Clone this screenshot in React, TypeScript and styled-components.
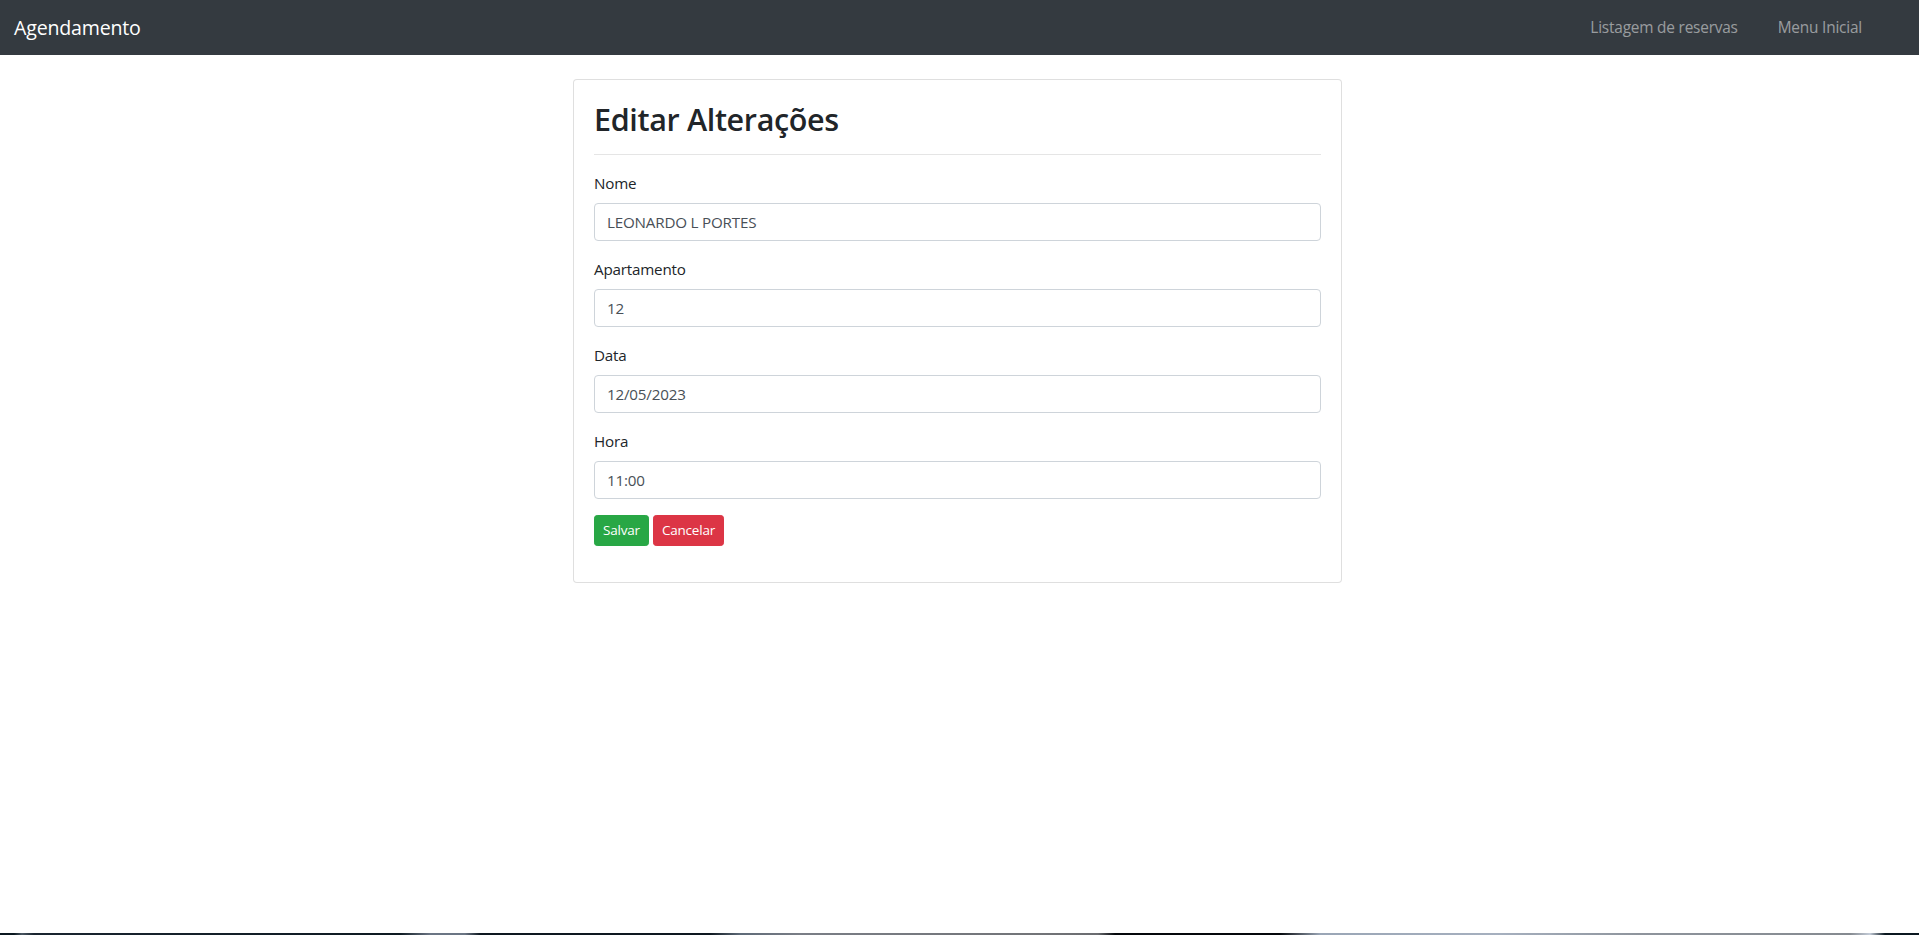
import React from "react";
import styled, { createGlobalStyle } from "styled-components";

const GlobalStyle = createGlobalStyle`
  html, body { margin: 0; padding: 0; background: #fff; }
  body {
    font-family: "Open Sans", "Noto Sans", "Liberation Sans", sans-serif;
    font-size: 16px;
    line-height: 1.5;
    color: #212529;
  }
  * { box-sizing: border-box; }
`;

const Page = styled.div`
  min-height: 100vh;
  display: flex;
  flex-direction: column;
`;

const NavBar = styled.nav`
  height: 55px;
  background: #343a40;
  display: flex;
  align-items: center;
  justify-content: space-between;
  padding: 0 57px 0 14px;
`;

const Brand = styled.a`
  color: #fff;
  font-size: 19.6px;
  line-height: 30px;
  text-decoration: none;
  letter-spacing: -0.2px;
`;

const NavLinks = styled.ul`
  list-style: none;
  margin: 0;
  padding: 0;
  display: flex;
  gap: 40px;
`;

const NavLink = styled.a`
  color: rgba(255, 255, 255, 0.5);
  font-size: 15.4px;
  line-height: 24px;
  text-decoration: none;
  letter-spacing: -0.2px;
`;

const Main = styled.main`
  flex: 1;
  display: flex;
  justify-content: center;
  padding: 24px 4px 0 0;
`;

const Card = styled.section`
  width: 769px;
  align-self: flex-start;
  border: 1px solid rgba(0, 0, 0, 0.125);
  border-radius: 4px;
  padding: 20px;
  background: #fff;
`;

const Title = styled.h2`
  margin: 0 0 8px;
  font-size: 30.5px;
  font-weight: 600;
  line-height: 38.4px;
  letter-spacing: -0.35px;
`;

const Rule = styled.hr`
  margin: 16px 0;
  border: 0;
  border-top: 1px solid rgba(0, 0, 0, 0.1);
`;

const FormGroup = styled.div`
  margin-bottom: 16px;
`;

const Label = styled.label`
  display: block;
  margin-bottom: 8px;
  font-size: 15.2px;
  line-height: 24px;
  letter-spacing: -0.2px;
`;

const Input = styled.input`
  display: block;
  width: 100%;
  height: 38px;
  padding: 6px 12px;
  font-family: inherit;
  font-size: 15.2px;
  line-height: 24px;
  color: #495057;
  background: #fff;
  border: 1px solid #ced4da;
  border-radius: 4px;
  letter-spacing: -0.2px;
  outline: none;
`;

const Actions = styled.div`
  display: flex;
  gap: 4px;
  margin-bottom: 16px;
`;

const Button = styled.button<{ $variant: "success" | "danger" }>`
  height: 31px;
  padding: 4px 8px;
  font-family: inherit;
  font-size: 13.5px;
  line-height: 21px;
  color: #fff;
  border: 1px solid ${(p) => (p.$variant === "success" ? "#28a745" : "#dc3545")};
  background: ${(p) => (p.$variant === "success" ? "#28a745" : "#dc3545")};
  border-radius: 3.2px;
  letter-spacing: -0.2px;
  cursor: pointer;
`;

const TaskStrip = styled.div`
  height: 2px;
  background: linear-gradient(
    to right,
    #0b1820 0px,
    #0b1820 14px,
    #4a5662 22px,
    #1a2530 34px,
    #0e1a22 400px,
    #6b7584 430px,
    #6b7584 465px,
    #0e1820 480px,
    #0e1820 710px,
    #5e6a78 740px,
    #7a7e86 800px,
    #727478 1040px,
    #6a6c70 1098px,
    #05080c 1115px,
    #05080c 1280px,
    #9aa6b6 1320px,
    #a6b0bf 1500px,
    #8e949c 1640px,
    #858a90 1850px,
    #c4ccd8 1870px,
    #0b1820 1885px,
    #0b1820 1919px
  );
`;

const fields = [
  { label: "Nome", value: "LEONARDO L PORTES" },
  { label: "Apartamento", value: "12" },
  { label: "Data", value: "12/05/2023" },
  { label: "Hora", value: "11:00" },
];

export default function App() {
  return (
    <>
      <GlobalStyle />
      <Page>
        <NavBar>
          <Brand href="#">Agendamento</Brand>
          <NavLinks>
            <li>
              <NavLink href="#">Listagem de reservas</NavLink>
            </li>
            <li>
              <NavLink href="#">Menu Inicial</NavLink>
            </li>
          </NavLinks>
        </NavBar>
        <Main>
          <Card>
            <Title>Editar Alterações</Title>
            <Rule />
            <form onSubmit={(e) => e.preventDefault()}>
              {fields.map((f) => (
                <FormGroup key={f.label}>
                  <Label>{f.label}</Label>
                  <Input defaultValue={f.value} />
                </FormGroup>
              ))}
              <Actions>
                <Button $variant="success" type="submit">Salvar</Button>
                <Button $variant="danger" type="button">Cancelar</Button>
              </Actions>
            </form>
          </Card>
        </Main>
        <TaskStrip />
      </Page>
    </>
  );
}
